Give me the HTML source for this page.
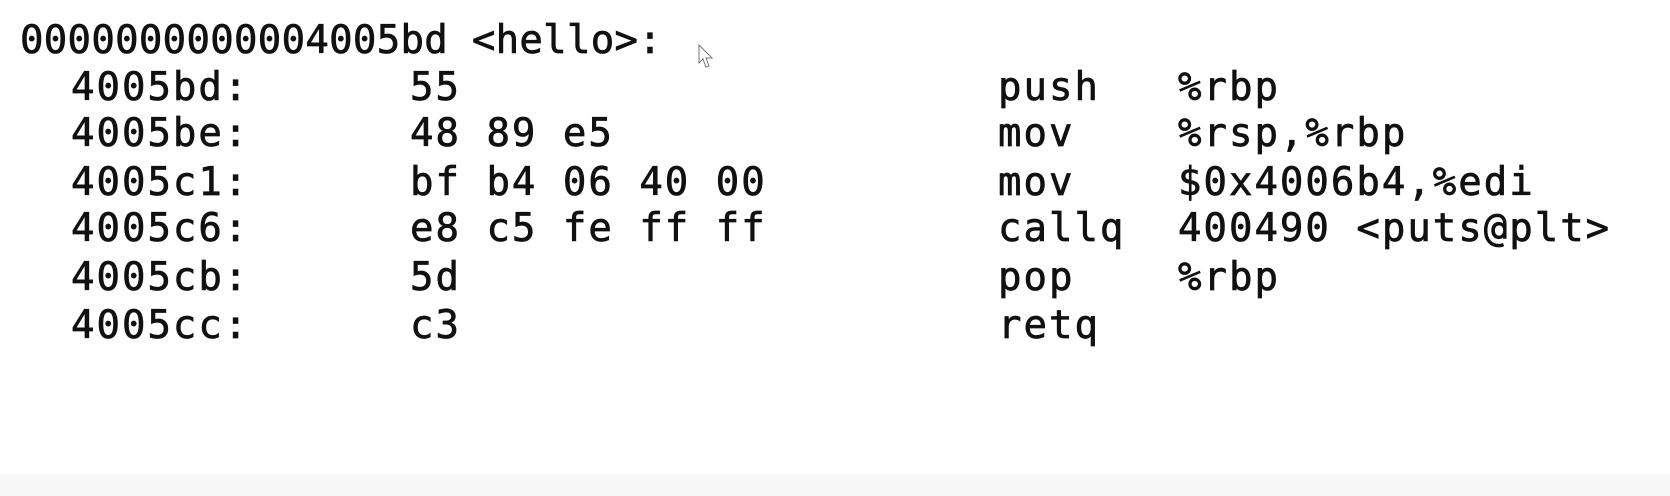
<!DOCTYPE html>
<html><head><meta charset="utf-8"><style>
html,body{margin:0;padding:0;background:#fff;width:1670px;height:496px;overflow:hidden}
svg{display:block}
text{font-family:"DejaVu Sans Mono","Liberation Mono",monospace;font-size:39px;fill:#111;stroke:#111;stroke-width:0.7}
</style></head><body>
<svg width="1670" height="496" viewBox="0 0 1670 496">
<rect x="0" y="0" width="1670" height="496" fill="#fff"/>
<rect x="0" y="474" width="1670" height="22" fill="#f7f7f7"/>
<text x="20" y="53" letter-spacing="0.3">0000000000004005bd &lt;hello&gt;:</text>
<g letter-spacing="2">
<text x="71" y="100">4005bd:</text><text x="410" y="100">55</text><text x="998" y="100">push</text><text x="1178" y="100">%rbp</text>
<text x="71" y="146">4005be:</text><text x="410" y="146">48 89 e5</text><text x="998" y="146">mov</text><text x="1178" y="146">%rsp,%rbp</text>
<text x="71" y="195">4005c1:</text><text x="410" y="195">bf b4 06 40 00</text><text x="998" y="195">mov</text><text x="1178" y="195">$0x4006b4,%edi</text>
<text x="71" y="241">4005c6:</text><text x="410" y="241">e8 c5 fe ff ff</text><text x="998" y="241">callq</text><text x="1178" y="241">400490 &lt;puts@plt&gt;</text>
<text x="71" y="290">4005cb:</text><text x="410" y="290">5d</text><text x="998" y="290">pop</text><text x="1178" y="290">%rbp</text>
<text x="71" y="338">4005cc:</text><text x="410" y="338">c3</text><text x="998" y="338">retq</text>
</g>
<path d="M699 45 L699 63 L703 59 L706 67 L709 66 L706 58 L712 58 Z" fill="#fff" stroke="#777" stroke-width="1"/>
</svg>
</body></html>
